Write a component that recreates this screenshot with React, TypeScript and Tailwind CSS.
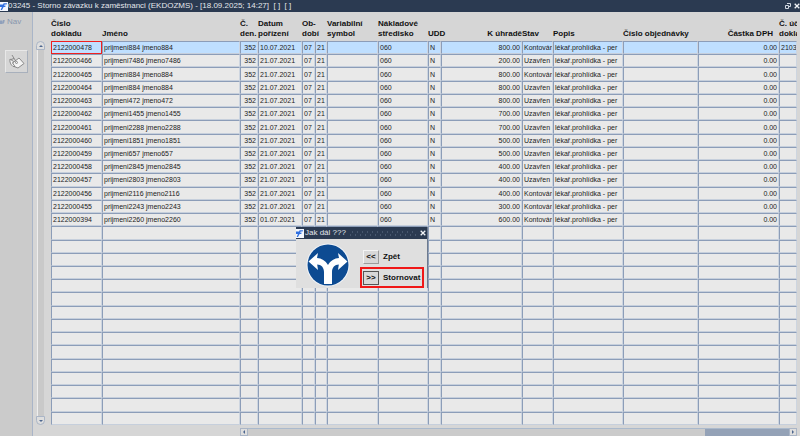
import React from "react";
import clsx from "clsx";

type Column = {
  label: string[];
  width: string;
  right?: boolean;
};

const columns: Column[] = [
  { label: ["Číslo", "dokladu"], width: "w-[51px]" },
  { label: ["Jméno"], width: "" },
  { label: ["Č.", "den."], width: "w-[18px]", right: true },
  { label: ["Datum", "pořízení"], width: "w-[44px]" },
  { label: ["Ob-", "dobí"], width: "w-[13px]" },
  { label: [], width: "w-[12px]" },
  { label: ["Variabilní", "symbol"], width: "w-[51px]" },
  { label: ["Nákladové", "středisko"], width: "w-[50px]" },
  { label: ["UDD"], width: "w-[13px]" },
  { label: ["K úhradě"], width: "w-[81px]", right: true },
  { label: ["Stav"], width: "w-[31px]" },
  { label: ["Popis"], width: "w-[70px]" },
  { label: ["Číslo objednávky"], width: "w-[75px]" },
  { label: ["Částka DPH"], width: "w-[81px]", right: true },
  { label: ["Č. úč", "dokla"], width: "w-[18px]" },
];

const documents = [
  ["2122000478", "prijmeni884 jmeno884", "10.07.2021", "800.00", "Kontován", "2103"],
  ["2122000466", "prijmeni7486 jmeno7486", "21.07.2021", "200.00", "Uzavřen", ""],
  ["2122000465", "prijmeni884 jmeno884", "21.07.2021", "800.00", "Kontován", ""],
  ["2122000464", "prijmeni884 jmeno884", "21.07.2021", "800.00", "Uzavřen", ""],
  ["2122000463", "prijmeni472 jmeno472", "21.07.2021", "800.00", "Uzavřen", ""],
  ["2122000462", "prijmeni1455 jmeno1455", "21.07.2021", "700.00", "Uzavřen", ""],
  ["2122000461", "prijmeni2288 jmeno2288", "21.07.2021", "700.00", "Uzavřen", ""],
  ["2122000460", "prijmeni1851 jmeno1851", "21.07.2021", "500.00", "Uzavřen", ""],
  ["2122000459", "prijmeni657 jmeno657", "21.07.2021", "500.00", "Uzavřen", ""],
  ["2122000458", "prijmeni2845 jmeno2845", "21.07.2021", "400.00", "Uzavřen", ""],
  ["2122000457", "prijmeni2803 jmeno2803", "21.07.2021", "400.00", "Uzavřen", ""],
  ["2122000456", "prijmeni2116 jmeno2116", "21.07.2021", "400.00", "Kontován", ""],
  ["2122000455", "prijmeni2243 jmeno2243", "21.07.2021", "300.00", "Kontován", ""],
  ["2122000394", "prijmeni2260 jmeno2260", "01.07.2021", "600.00", "Kontován", ""],
];

const rows: string[][] = Array.from({ length: 29 }, (_, i) => {
  const doc = documents[i];
  if (!doc) return columns.map(() => "");
  const [id, name, date, amount, state, account] = doc;
  return [
    id, name, "352", date, "07", "21", "", "060", "N",
    amount, state, "lékař.prohlídka - per", "", "0.00", account,
  ];
});

function AppIcon({ className }: { className?: string }) {
  return (
    <svg viewBox="0 0 8 9" className={className} aria-hidden="true">
      <rect width="8" height="9" fill="#f4f8ff" />
      <path d="M0 2.5h3L2 5H0zM3.6 1.2h3.6L6.6 2.6H4.6L4.2 3.8h1.8L5 5H3.6L2 8H.6z" fill="#2f6fe0" />
    </svg>
  );
}

function TitleBar() {
  return (
    <header className="flex h-[12px] shrink-0 items-center bg-[#2b3a51] text-[8px] leading-[12px] text-[#e4e7ec]">
      <AppIcon className="h-[9px] w-[8px]" />
      <h1 className="flex-1 whitespace-pre">
        03245 - Storno závazku k zaměstnanci (EKDOZMS) - [18.09.2025; 14:27]  [ ]  [ ]
      </h1>
      <button type="button" aria-label="Obnovit" className="mr-[3px]">
        <svg viewBox="0 0 6 6" className="size-[6px]" fill="none" stroke="#cfd5de">
          <path d="M2 .5h3.5V3.5H4M.5 2.500h3v3h-3z" />
        </svg>
      </button>
      <button type="button" aria-label="Zavřít">
        <svg viewBox="0 0 6 6" className="size-[6px]" stroke="#f2f4f7" strokeWidth="1.3">
          <path d="M.7.7l4.600 4.600M5.300.7L.7 5.300" />
        </svg>
      </button>
    </header>
  );
}

function Sidebar() {
  return (
    <aside className="flex w-[33px] shrink-0 flex-col border-r border-[#a9b5c8] bg-[#cbcbcb]">
      <div className="flex h-[20px] items-center gap-[2px] text-[8px] text-[#8796ae]">
        <svg viewBox="0 0 5 6" className="h-[6px] w-[5px]" aria-hidden="true">
          <path d="M0 1.500h2.500V5H0zM3 1h1.800L4 4.500H2.500" fill="#8fa0bb" />
        </svg>
        Nav
      </div>
      <button
        type="button"
        aria-label="Vymazat"
        className="mt-[18px] ml-[5px] flex size-[23px] items-center justify-center border border-t-[#e8e8e8] border-r-[#a8b0bc] border-b-[#a8b0bc] border-l-[#e8e8e8] bg-[#d6d6d6]"
      >
        <svg viewBox="0 0 16 16" className="size-[16px]" fill="#f3f3f3" stroke="#808080" strokeWidth=".9">
          <path d="M3.500 9L10 4l5 5.500-6 4.500-4-1.500z" />
          <path d="M1 5c-.5 3 .5 5.500 3 7.500h2L3.500 9l1-1.500z" />
          <path d="M3 1l4 6.500M2 5.500l3-1" fill="none" />
          <circle cx="7.500" cy="8.500" r="1" />
        </svg>
      </button>
    </aside>
  );
}

function ScrollArrow({ label, d, className }: { label: string; d: string; className?: string }) {
  return (
    <button
      type="button"
      aria-label={label}
      className={clsx("flex shrink-0 items-center justify-center border border-[#aab5c6] bg-[#dedede]", className)}
    >
      <svg viewBox="0 0 4 4" className="size-[4px]" fill="#4d668e">
        <path d={d} />
      </svg>
    </button>
  );
}

function VerticalScrollbar() {
  return (
    <div className="mt-[29px] mb-[11px] ml-[3px] flex w-[9px] shrink-0 flex-col items-center">
      <ScrollArrow label="Nahoru" d="M0 3l2-2 2 2z" className="size-[9px] rounded-t-full rounded-b-sm" />
      <div className="w-[7px] flex-1 border-l border-[#eeeeee] bg-[#c9c9c9]" />
      <ScrollArrow label="Dolů" d="M0 1l2 2 2-2z" className="size-[9px] rounded-t-sm rounded-b-full" />
    </div>
  );
}

function HorizontalScrollbar() {
  return (
    <div className="mt-[3px] ml-[189px] flex h-[8px] shrink-0">
      <ScrollArrow label="Vlevo" d="M3 0L1 2l2 2z" className="w-[8px]" />
      <div className="flex flex-1 justify-end border-t border-[#aab9cc] bg-[#cbcbcb]">
        <div className="h-full w-[84px] bg-[#94a2b7]" />
      </div>
      <ScrollArrow label="Vpravo" d="M1 0l2 2-2 2z" className="w-[8px]" />
    </div>
  );
}

function DocumentTable() {
  return (
    <table className="w-full flex-1 table-fixed border-separate border-spacing-0 text-left whitespace-nowrap">
      <colgroup>
        {columns.map((column, i) => (
          <col key={i} className={column.width} />
        ))}
      </colgroup>
      <thead>
        <tr className="h-[29px]">
          {columns.map((column, i) => (
            <th
              key={i}
              className={clsx(
                "p-0 pb-[2px] align-bottom text-[8px] leading-[10px] font-bold text-[#111111]",
                column.label[0] === "Částka DPH" && "pr-[6px]",
              )}
            >
              <div className={clsx(column.right && column.label.length === 1 && "flex justify-end")}>
                {column.label.map((line) => (
                  <div key={line}>{line}</div>
                ))}
              </div>
            </th>
          ))}
        </tr>
      </thead>
      <tbody>
        {rows.map((row, r) => (
          <tr key={r} className={clsx("h-[13px]", r === 0 ? "bg-[#bfdfff]" : "bg-[#e9e9e9]")}>
            {row.map((value, c) => (
              <td
                key={c}
                className={clsx(
                  "overflow-hidden border px-px py-0 text-[7px] leading-[11px] text-[#222222]",
                  r === 0 && c === 0
                    ? "border-[#f02020]"
                    : "border-t-[#8c9db8] border-r-[#cdd5e0] border-b-[#c6cfdc] border-l-[#8c9db8]",
                  columns[c].right && "text-right",
                )}
              >
                {value}
              </td>
            ))}
          </tr>
        ))}
      </tbody>
    </table>
  );
}

function NextStepDialog() {
  return (
    <section
      role="dialog"
      aria-labelledby="dialog-title"
      className="absolute top-[227px] left-[296px] flex h-[61px] w-[132px] flex-col border-r border-[#6d7a8e] bg-[#dfdfdf]"
    >
      <div className="flex h-[12px] shrink-0 items-center gap-px bg-[#2b3a51] pr-px text-[8px] leading-[12px] text-[#e4e7ec]">
        <AppIcon className="h-[9px] w-[8px]" />
        <h2 id="dialog-title">Jak dál ???</h2>
        <svg className="mx-[3px] h-[5px] flex-1" aria-hidden="true">
          <defs>
            <pattern id="grip" width="5" height="5" patternUnits="userSpaceOnUse">
              <path d="M0 4h1M2 1h1" stroke="#64738b" />
            </pattern>
          </defs>
          <rect width="100%" height="100%" fill="url(#grip)" />
        </svg>
        <button type="button" aria-label="Zavřít dialog">
          <svg viewBox="0 0 6 6" className="size-[6px]" stroke="#f2f4f7" strokeWidth="1.3">
            <path d="M.7.7l4.600 4.600M5.300.7L.7 5.300" />
          </svg>
        </button>
      </div>
      <div className="flex flex-1 items-start pl-[10px]">
        <svg viewBox="0 0 44 44" className="mt-[4px] size-[44px]" aria-hidden="true">
          <circle cx="22" cy="22" r="21.500" fill="#f2f5f9" />
          <circle cx="22" cy="22" r="20.500" fill="#0d4b92" />
          <path
            d="M2.500 18.500L12 10l-1 5c4.500.3 8.500 2.500 11 7 2.500-4.500 6.500-6.700 11-7l-1-5 9.500 8.500-9.500 8.500.8-5.500c-4 0-6.800 3-6.800 7.500v12h-8V29c0-4.500-2.800-7.500-6.800-7.500L12 27z"
            fill="#fff"
          />
        </svg>
        <div className="mt-[7px] ml-[10px] flex flex-col text-[8px] font-bold text-[#111111]">
          <div className="flex h-[21px] items-center gap-[4px] pl-[3px]">
            <button
              id="back"
              type="button"
              aria-labelledby="back back-label"
              className="h-[14px] w-[16px] border border-t-[#f4f4f4] border-r-[#9c9c9c] border-b-[#9c9c9c] border-l-[#f4f4f4] bg-[#d8d8d8] leading-[10px]"
            >
              &lt;&lt;
            </button>
            <label id="back-label" htmlFor="back">
              Zpět
            </label>
          </div>
          <div className="flex h-[21px] w-[64px] items-center gap-[4px] border-2 border-[#f01818] pl-px">
            <button
              id="cancel"
              type="button"
              aria-labelledby="cancel cancel-label"
              className="h-[14px] w-[16px] border border-[#555555] bg-[#d8d8d8] leading-[10px]"
            >
              &gt;&gt;
            </button>
            <label id="cancel-label" htmlFor="cancel">
              Stornovat
            </label>
          </div>
        </div>
      </div>
    </section>
  );
}

export default function App() {
  return (
    <div className="relative flex h-screen flex-col overflow-hidden bg-[#d6d6d6] font-['Liberation_Sans',Arial,sans-serif]">
      <TitleBar />
      <main className="flex min-h-0 flex-1">
        <Sidebar />
        <VerticalScrollbar />
        <div className="mr-[3px] ml-[6px] flex min-w-0 flex-1 flex-col overflow-hidden">
          <DocumentTable />
          <HorizontalScrollbar />
        </div>
      </main>
      <NextStepDialog />
    </div>
  );
}
